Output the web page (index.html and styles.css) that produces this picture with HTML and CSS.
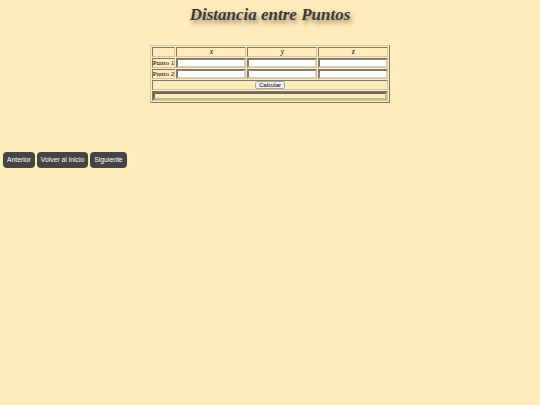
FILE: index.html
```html
<!DOCTYPE html>
<html>
<head>
<meta charset="utf-8">
<link rel="stylesheet" href="styles.css">
</head>
<body>
<h1 class="title">Distancia entre Puntos</h1>
<table class="calc">
<tr class="head"><td></td><td><i>x</i></td><td><i>y</i></td><td><i>z</i></td></tr>
<tr><td class="lbl">Punto 1</td><td><input class="num" type="text"></td><td><input class="num" type="text"></td><td><input class="num" type="text"></td></tr>
<tr><td class="lbl">Punto 2</td><td><input class="num" type="text"></td><td><input class="num" type="text"></td><td><input class="num" type="text"></td></tr>
<tr><td colspan="4" class="center"><button class="calc-btn">Calcular</button></td></tr>
<tr><td colspan="4"><div class="result"></div></td></tr>
</table>
<nav class="nav">
<a class="nav-btn">Anterior</a>
<a class="nav-btn">Volver al inicio</a>
<a class="nav-btn">Siguiente</a>
</nav>
</body>
</html>
```
FILE: styles.css
```css
html, body { margin: 0; padding: 0; }
body {
  background: #ffebbb;
  font-family: "Liberation Serif", serif;
  font-size: 7px;
  color: #000;
  width: 540px;
  height: 405px;
}
.title {
  margin: 0;
  padding-top: 5px;
  height: 24px;
  text-align: center;
  font-family: "Liberation Serif", serif;
  font-size: 17px;
  font-weight: bold;
  font-style: italic;
  color: #3a3a3a;
  text-shadow: 2px 3px 5px #857a58;
  line-height: 20px;
}
.calc {
  margin: 16px auto 0;
  width: 237px;
  border: 1px outset #d4c8a4;
  border-collapse: separate;
  border-spacing: 1px;
  box-sizing: border-box;
}
.calc td {
  border: 1px inset #d4c8a4;
  padding: 0;
  height: 8px;
  font-size: 7px;
  line-height: 8px;
  text-align: center;
}
.calc tr.head td { font-size: 7.5px; }
.calc td.lbl { text-align: left; width: 22px; white-space: nowrap; }
.calc td.center { text-align: center; }
.num {
  display: block;
  box-sizing: border-box;
  width: 68px;
  height: 8px;
  margin: 0;
  padding: 0;
  border: 1px inset #d8d0bc;
  background: #fff;
  font-size: 6px;
}
.calc-btn {
  display: block;
  box-sizing: border-box;
  height: 8px;
  margin: 0 auto;
  padding: 0 3px;
  font-family: "Liberation Sans", sans-serif;
  font-size: 6px;
  line-height: 5px;
  background: #efefef;
  border: 1px solid #a8a8a8;
  border-radius: 2px;
  color: #000;
}
.result {
  box-sizing: border-box;
  height: 8px;
  border: 2px inset #c4b994;
  margin: 0;
}
.nav {
  display: flex;
  gap: 2px;
  margin: 49px 0 0 3px;
}
.nav-btn {
  display: block;
  background: #454545;
  color: #fff;
  font-family: "Liberation Sans", sans-serif;
  font-size: 6.8px;
  line-height: 16px;
  height: 16px;
  padding: 0 4px;
  border-radius: 4px;
}
```
